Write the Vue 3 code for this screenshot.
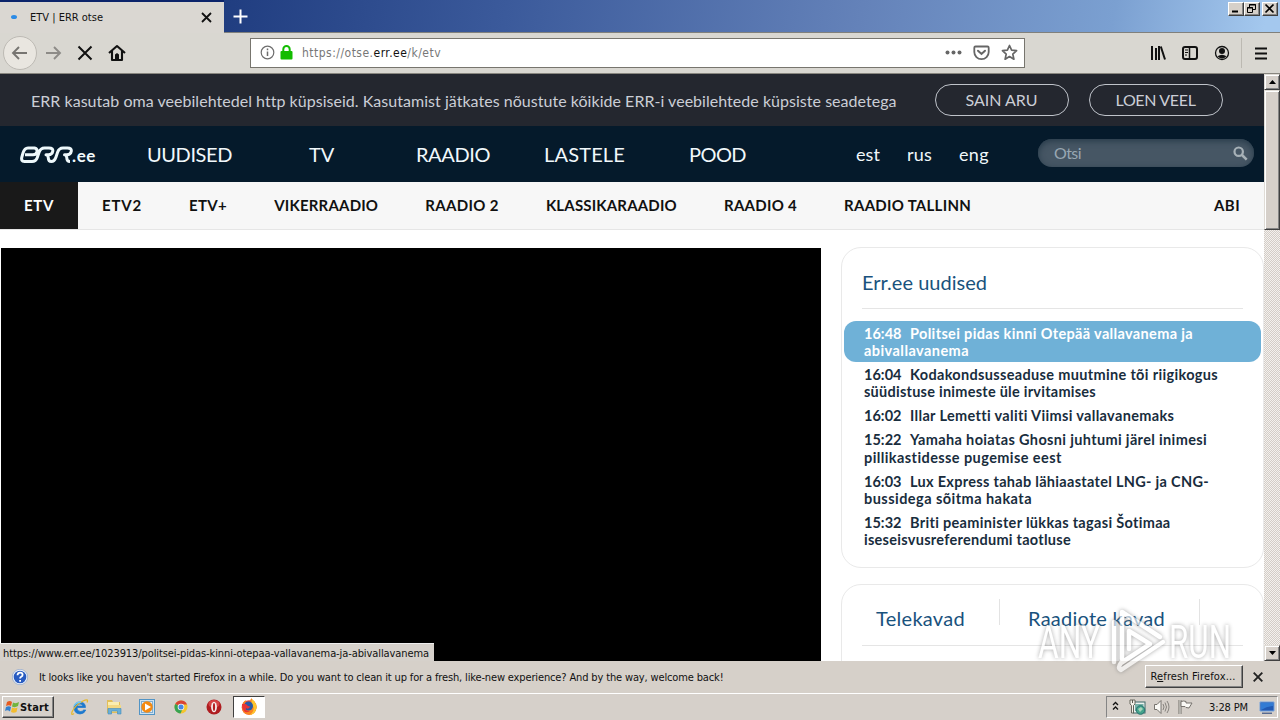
<script setup>
// Spreads letter spacing so that a label occupies a given width in pixels.
const vFit = {
  mounted(el, { value }) {
    const count = el.textContent.length
    el.style.letterSpacing = (value - el.getBoundingClientRect().width) / count + 'px'
  },
}

const mainNav = [
  { label: 'UUDISED', width: 85, id: 'uudised' },
  { label: 'TV', width: 25, id: 'tv' },
  { label: 'RAADIO', width: 74, id: 'raadio' },
  { label: 'LASTELE', width: 81, id: 'lastele' },
  { label: 'POOD', width: 57, id: 'pood' },
]
const languages = [
  { label: 'est', width: 24 },
  { label: 'rus', width: 25 },
  { label: 'eng', width: 30 },
]
const channels = [
  { label: 'ETV2', width: 40 },
  { label: 'ETV+', width: 38 },
  { label: 'VIKERRAADIO', width: 104 },
  { label: 'RAADIO 2', width: 73.5 },
  { label: 'KLASSIKARAADIO', width: 131 },
  { label: 'RAADIO 4', width: 73 },
  { label: 'RAADIO TALLINN', width: 127 },
]
const news = [
  { time: '16:48', first: 'Politsei pidas kinni Otepää vallavanema ja', w1: 283, second: 'abivallavanema', w2: 105 },
  { time: '16:04', first: 'Kodakondsusseaduse muutmine tõi riigikogus', w1: 308, second: 'süüdistuse inimeste üle irvitamises', w2: 232 },
  { time: '16:02', first: 'Illar Lemetti valiti Viimsi vallavanemaks', w1: 264 },
  { time: '15:22', first: 'Yamaha hoiatas Ghosni juhtumi järel inimesi', w1: 297, second: 'pillikastidesse pugemise eest', w2: 198 },
  { time: '16:03', first: 'Lux Express tahab lähiaastatel LNG- ja CNG-', w1: 299, second: 'bussidega sõitma hakata', w2: 168 },
  { time: '15:32', first: 'Briti peaminister lükkas tagasi Šotimaa', w1: 261, second: 'iseseisvusreferendumi taotluse', w2: 207 },
]
</script>

<template>
  <div class="screen">
    <div class="titlebar">
      <div class="tab">
        <i class="throbber"></i>
        <span v-fit="73" class="tab-title">ETV | ERR otse</span>
        <svg class="tab-close" width="11" height="11" viewBox="0 0 11 11"><path d="M1 1l9 9M10 1l-9 9" stroke="#111" stroke-width="1.8" /></svg>
      </div>
      <svg class="new-tab" width="15" height="15" viewBox="0 0 15 15"><path d="M7.5 .5v14M.5 7.500h14" stroke="#fff" stroke-width="2" /></svg>
      <div class="window-buttons">
        <b><svg width="13" height="11"><path d="M3 8.5h6" stroke="#000" stroke-width="2" /></svg></b>
        <b><svg width="13" height="11"><path d="M4.5 4V1.5h6v5H8M4 2h7M2.5 4.5h5v5h-5zM2 5h6" fill="none" stroke="#000" /></svg></b>
        <b class="close"><svg width="13" height="11"><path d="M2.5 1.5l8 8M10.5 1.5l-8 8" stroke="#000" stroke-width="1.7" /></svg></b>
      </div>
    </div>

    <div class="toolbar">
      <div class="nav-tools">
        <span class="back"><svg width="18" height="16" viewBox="0 0 18 16"><path d="M16 8H2M8 2L2 8l6 6" fill="none" stroke="#777571" stroke-width="1.9" /></svg></span>
        <svg width="18" height="16" viewBox="0 0 18 16"><path d="M2 8h14M10 2l6 6-6 6" fill="none" stroke="#8d8b87" stroke-width="1.9" /></svg>
        <svg class="stop" width="16" height="16" viewBox="0 0 16 16"><path d="M1.5 1.5l13 13M14.500 1.5l-13 13" stroke="#111" stroke-width="2" /></svg>
        <svg class="home" width="18" height="18" viewBox="0 0 18 18"><path d="M1 9l8-7 8 7M4 7v9h10V7" fill="none" stroke="#111" stroke-width="2.1" stroke-linejoin="round" /><path d="M7 15.500v-5L9 9l2 1.500v5z" fill="#111" /></svg>
      </div>
      <div class="address">
        <svg class="info" width="15" height="15" viewBox="0 0 15 15"><circle cx="7.500" cy="7.500" r="6.300" fill="none" stroke="#6d6d6d" stroke-width="1.2" /><path d="M7.500 6.500v4.500M7.500 3.500v1.800" stroke="#6d6d6d" stroke-width="1.500" /></svg>
        <svg class="lock" width="13" height="15" viewBox="0 0 13 15"><path d="M3.300 7V4.300a3.200 3.200 0 0 1 6.400 0V7" fill="none" stroke="#12bc00" stroke-width="2" /><rect x=".5" y="6" width="12" height="8.500" rx="1" fill="#12bc00" /></svg>
        <span v-fit="139" class="url">https://otse.<em>err.ee</em>/k/etv</span>
        <svg class="dots" width="17" height="5" viewBox="0 0 17 5"><g fill="#666"><circle cx="2.500" cy="2.500" r="2" /><circle cx="8.500" cy="2.500" r="2" /><circle cx="14.500" cy="2.500" r="2" /></g></svg>
        <svg class="pocket" width="17" height="16" viewBox="0 0 17 16"><path d="M2.500 1.500h12q1.200 0 1.200 1.200V7a7.200 7.200 0 0 1-14.400 0V2.700q0-1.200 1.200-1.200z" fill="none" stroke="#666" stroke-width="1.800" /><path d="M5 5.700L8.500 9 12 5.700" fill="none" stroke="#666" stroke-width="2" stroke-linecap="round" /></svg>
        <svg class="star" width="17" height="17" viewBox="0 0 17 17"><path d="M8.500 1.500l2.100 4.700 5 .5-3.800 3.400 1.100 5.100-4.400-2.700-4.400 2.700 1.100-5.100-3.800-3.400 5-.5z" fill="none" stroke="#666" stroke-width="1.700" stroke-linejoin="round" /></svg>
      </div>
      <div class="menu-tools">
        <svg width="16" height="16" viewBox="0 0 16 16"><path d="M2 1v14M6 3v12M9 1v14" stroke="#111" stroke-width="2" /><path d="M10.800 1.500l4.200 13" stroke="#111" stroke-width="2" /></svg>
        <svg class="sidebar" width="16" height="16" viewBox="0 0 16 16"><rect x="1" y="2" width="14" height="12" rx="2" fill="none" stroke="#111" stroke-width="2" /><path d="M7.500 2v12" stroke="#111" stroke-width="1.500" /><path d="M3 5h3M3 7.500h3M3 10h2" stroke="#111" /></svg>
        <svg class="account" width="16" height="16" viewBox="0 0 16 16"><circle cx="8" cy="8" r="6.500" fill="none" stroke="#111" stroke-width="1.300" /><circle cx="8" cy="6" r="3" fill="#111" /><path d="M3.500 11.200q4.500-3 9 0Q8 16 3.500 11.200z" fill="#111" /></svg>
        <i class="divider"></i>
        <svg class="burger" width="12" height="13" viewBox="0 0 12 13"><path d="M0 1.500h12M0 6.500h12M0 11.500h12" stroke="#111" stroke-width="2" /></svg>
      </div>
    </div>

    <div class="viewport">
      <div class="page">
        <div class="cookies">
          <span v-fit="865">ERR kasutab oma veebilehtedel http küpsiseid. Kasutamist jätkates nõustute kõikide ERR-i veebilehtede küpsiste seadetega</span>
          <a><span v-fit="72">SAIN ARU</span></a>
          <a class="more"><span v-fit="80">LOEN VEEL</span></a>
        </div>
        <header class="header">
          <div class="brand">
            <svg width="53" height="18" viewBox="0 0 53 18"><path d="M5 8.700h8q3.500 0 4-3T14.500 2H8Q4.500 2 3 7L2 10.500q-1.500 5 2.500 5H12q4 0 5.300-4L19 6.500Q20.500 2 24.500 2H29q4.500 0 3.700 3.500-.6 3.200-4.200 3.200H26q2.200 0 2.300 3.300.1 3.500 3 3.500 3.200 0 4.700-4.500l1.500-4.500Q39 2 43 2h4.500q4.500 0 3.700 3.500-.6 3.200-4.200 3.200h-2.500q2.200 0 2.300 3.300.1 3.500 3.200 3.500" fill="none" stroke="#eef8fb" stroke-width="3" stroke-linejoin="round" /></svg>
            <span v-fit="24">.ee</span>
          </div>
          <nav class="main-nav"><a v-for="n in mainNav" :key="n.id" v-fit="n.width" :class="n.id">{{ n.label }}</a></nav>
          <div class="languages"><a v-for="l in languages" :key="l.label" v-fit="l.width">{{ l.label }}</a></div>
          <div class="search">
            <span v-fit="27">Otsi</span>
            <svg width="15" height="15" viewBox="0 0 15 15"><circle cx="5.700" cy="5.700" r="4.200" fill="none" stroke="#a7b1b7" stroke-width="2.200" /><path d="M9 9l4.700 4.700" stroke="#a7b1b7" stroke-width="2.500" /></svg>
          </div>
        </header>
        <nav class="channels">
          <a class="active"><span v-fit="30">ETV</span></a>
          <a v-for="c in channels" :key="c.label" v-fit="c.width">{{ c.label }}</a>
          <a v-fit="26" class="help">ABI</a>
        </nav>
        <div class="content">
          <div class="player"></div>
          <aside>
            <section class="card">
              <h2><span v-fit="125">Err.ee uudised</span></h2>
              <ul>
                <li v-for="(item, i) in news" :key="item.time" :class="{ selected: i === 0 }">
                  <div><time v-fit="37.500">{{ item.time }}</time><span v-fit="item.w1">{{ item.first }}</span></div>
                  <div v-if="item.second"><span v-fit="item.w2">{{ item.second }}</span></div>
                </li>
              </ul>
            </section>
            <section class="card schedules">
              <div class="schedule-tabs">
                <span class="schedule"><span v-fit="89">Telekavad</span></span>
                <span class="schedule radio"><span v-fit="137">Raadiote kavad</span></span>
              </div>
            </section>
          </aside>
        </div>
      </div>
      <div class="scrollbar">
        <b class="arrow"><svg width="7" height="4"><path d="M0 4L3.500 0 7 4z" /></svg></b>
        <b class="thumb"></b>
        <b class="arrow down"><svg width="7" height="4"><path d="M0 0h7L3.500 4z" /></svg></b>
      </div>
      <div class="status"><span v-fit="426">https://www.err.ee/1023913/politsei-pidas-kinni-otepaa-vallavanema-ja-abivallavanema</span></div>
    </div>

    <div class="infobar">
      <svg width="16" height="16" viewBox="0 0 16 16"><circle cx="8" cy="8" r="7" fill="#285bc1" stroke="#edf2fa" stroke-width="1.300" /><circle cx="8" cy="8" r="7.700" fill="none" stroke="#7d98c4" stroke-width=".6" /><path d="M5.500 6.300q.2-2.600 2.600-2.600 2.500 0 2.500 2 0 1.300-1.400 2-1.100.6-1.100 1.700M8.100 11v1.800" fill="none" stroke="#fff" stroke-width="1.800" /></svg>
      <span v-fit="684.500">It looks like you haven't started Firefox in a while. Do you want to clean it up for a fresh, like-new experience? And by the way, welcome back!</span>
      <button><span v-fit="85">R<u>e</u>fresh Firefox...</span></button>
      <svg class="dismiss" width="10" height="10" viewBox="0 0 10 10"><path d="M.7.7l8.600 8.600M9.300.7L.7 9.300" stroke="#222" stroke-width="1.900" /></svg>
    </div>

    <div class="taskbar">
      <div class="start">
        <svg width="16" height="16" viewBox="0 0 16 16"><path d="M3 3q3-2 5 0L7 7Q5 5.500 2 7z" fill="#e75b20" /><path d="M9 3.500q3 1.500 6-.5l-1 4q-3 2-6 .500z" fill="#72b43d" /><path d="M2 8q3-1.500 5 0l-1 4.500q-2.500-2-5-.500z" fill="#3480cf" /><path d="M8 8.500q3 1.500 5.500 0l-1 4.500q-3 1.500-5.500 0z" fill="#f3bc2f" /></svg>
        <span v-fit="29">Start</span>
      </div>
      <svg class="app" width="18" height="18" viewBox="0 0 18 18"><path d="M14.500 9.500H6q0 4 3.500 4 2.200 0 3-1.500h2.300Q13.200 16 9 16 3 15.500 3 9.500 3.500 4 9 4q5.500.3 5.500 5.500zM6 8h5.800Q11.500 6 9 6 6.500 6 6 8z" fill="#1c79ce" stroke="#1c79ce" stroke-width=".7" /><path d="M3 15.500Q0 18 1 14 4 7 12 3q6-3 4 1.500" fill="none" stroke="#e6b92e" stroke-width="1.300" /><path d="M3 8q2-4 7-4" fill="none" stroke="#72caf4" stroke-width="1.300" /></svg>
      <svg class="app" width="18" height="18" viewBox="0 0 18 18"><path d="M2 2h5l1 2h7v11H2z" fill="#e2be59" /><path d="M3 4h11v9H3z" fill="#fbeeb0" /><path d="M3 7h13v7H3z" fill="#f4d984" /><path d="M3 16v-5.500h13V16h-3.500v-3h-6v3z" fill="#6aafd6" stroke="#3f8abe" stroke-width=".6" /></svg>
      <svg class="app" width="18" height="18" viewBox="0 0 18 18"><rect x="1.500" y="1.500" width="15" height="15" fill="#cde2f1" stroke="#5294c5" /><rect x="3.500" y="3.500" width="11" height="11" fill="#e3edf5" stroke="#80add0" /><circle cx="9" cy="9" r="5.700" fill="#f48a12" /><path d="M7 5.500v7L13 9z" fill="#fff" /></svg>
      <svg class="app" width="18" height="18" viewBox="0 0 18 18"><circle cx="9" cy="9" r="6.500" fill="#f4c52e" /><path d="M9 9L3.200 6A6.500 6.500 0 0 1 15 6.500H9z" fill="#d94335" /><path d="M3.200 6A6.500 6.500 0 0 0 8.500 15.500L11 10z" fill="#38a352" /><circle cx="9" cy="9" r="3.300" fill="#f5f5f5" /><circle cx="9" cy="9" r="2.500" fill="#4786e4" /></svg>
      <svg class="app opera" width="18" height="18" viewBox="0 0 18 18"><circle cx="9" cy="9" r="7.500" fill="#af1d20" /><ellipse cx="9" cy="6" rx="5.500" ry="4" fill="#d74345" /><ellipse cx="9" cy="9" rx="2.900" ry="5.300" fill="#f4eeee" /><ellipse cx="9" cy="9" rx="1.100" ry="4" fill="#b51f21" /></svg>
      <div class="running"><svg width="18" height="18" viewBox="0 0 18 18"><circle cx="9" cy="9.500" r="7.300" fill="#f04d2e" /><path d="M2 10Q2 4 6 2q-1 3 1 4l4-1Q9 2 12 0q-.5 2 2 3 4 4 2 9-3 6-8 4.500Q3 16 2 10z" fill="#fa8420" /><path d="M12 1q5 4 4.500 9-1 6-7 7 5-3 4-8-2-2-2-5 0-2 .5-3z" fill="#fdc52d" /><circle cx="8.500" cy="8" r="4.500" fill="#2859a8" /><path d="M2 6q4-1 6 2 2 0 2 1-2 3-4 1-1 3 4 3-4 2.500-6 0-2.500-3-2-7z" fill="#e83435" /></svg></div>
      <div class="tray">
        <svg class="chevrons" width="7" height="10" viewBox="0 0 7 10"><path d="M1 4l2.500-2.500L6 4M1 8.500L3.500 6 6 8.500" fill="none" stroke="#111" stroke-width="1.300" /></svg>
        <svg class="network" width="17" height="16" viewBox="0 0 17 16"><rect x="4.500" y="3" width="11.500" height="11" fill="#edf2ee" stroke="#3e6869" /><path d="M6 5h8.500v7H6z" fill="#78b2a8" /><path d="M1 1h5v4L4.500 6.500V14h-2V6.500L1 5z" fill="#f4f2e9" stroke="#5b5b51" stroke-width=".9" /><path d="M3.500 1v3" stroke="#5b5b51" /><circle cx="11.500" cy="11" r="4.300" fill="#45a38b" stroke="#25726f" /><path d="M9 10l3-2 2 2-3 3z" fill="#a9d4bb" /></svg>
        <svg class="volume" width="17" height="16" viewBox="0 0 17 16"><path d="M1.500 5.500H4l4-4v13l-4-4H1.500z" fill="#faf9f5" stroke="#77736e" /><path d="M10 5q2 3 0 6M12 3.500q3 4.500 0 9M14 2q4 6 0 12" fill="none" stroke="#86837e" /></svg>
        <svg class="flag" width="17" height="16" viewBox="0 0 17 16"><path d="M3 1v14" stroke="#716e69" stroke-width="3" /><path d="M3 1v14" stroke="#f6f4ef" /><path d="M4 2.500q3-1 5 0v1.500h6l-3 5-3-.5-1-1H4z" fill="#faf9f5" stroke="#77736e" /></svg>
        <span v-fit="39" class="clock">3:28 PM</span>
        <svg class="desktop" width="16" height="13" viewBox="0 0 16 13"><path d="M1 1h14v9H1z" fill="#2159b3" stroke="#74a3dd" /><path d="M2 2h12v3Q8 5 2 9z" fill="#327bd4" /><path d="M3 12.200h10" stroke="#1d3c76" /></svg>
      </div>
    </div>

    <svg class="watermark" width="202" height="72" viewBox="0 0 202 72">
      <g class="mark">
        <text x="4" y="54" textLength="62" lengthAdjust="spacingAndGlyphs">ANY</text>
        <path d="M80 18V58M88 55V8L126 33M95 45V27L116 40 87 59Q83 64 87 66L129 38" />
        <text x="135" y="54" textLength="62" lengthAdjust="spacingAndGlyphs">RUN</text>
      </g>
    </svg>
  </div>
</template>

<style>
body { overflow: hidden; }
</style>

<style scoped>
.screen { position: relative; width: 1280px; height: 720px; overflow: hidden; display: flex; flex-direction: column; background: #d6d0ca; font: 11px "DejaVu Sans Condensed", "DejaVu Sans", sans-serif; color: #111; }
.screen * { box-sizing: border-box; }
span, a, time { white-space: nowrap; }
svg { display: block; flex: none; }
.titlebar { height: 33px; flex: none; display: flex; border-bottom: 1px solid #80807c; background: linear-gradient(100deg, #1f3c7c 0, #203d80 220px, #3b5a9b 500px, #6482b9 850px, #7ba0d1 1100px, #a4c8ee 1250px); }
.tab { width: 224px; height: 33px; border-top: 2px solid #0b246b; background: #dad7d2; display: flex; align-items: center; }
.throbber { width: 6px; height: 4px; margin: 0 0 1px 11px; border-radius: 50%; background: #2b8be6; }
.tab-title { margin-left: 13px; line-height: 20px; }
.tab-close { margin-left: 98px; }
.new-tab { margin: 9px 0 0 9px; }
.window-buttons { display: flex; margin: 2px 2px 0 auto; }
.window-buttons b { width: 16px; height: 14px; background: #d6d0c9; border: 1px solid; border-color: #fff #404040 #404040 #fff; box-shadow: inset -1px -1px #858585; }
.window-buttons .close { margin-left: 2px; }
.toolbar { height: 41px; flex: none; display: flex; align-items: center; background: #d9d7d1; border-bottom: 1px solid #88867f; }
.nav-tools { width: 250px; display: flex; align-items: center; }
.back { width: 34px; height: 34px; margin: 0 7px 0 3px; border: 1px solid #bdbab4; border-radius: 50%; background: #e9e6e0; display: grid; place-items: center; }
.stop { margin-left: 15px; }
.home { margin-left: 15px; }
.address { width: 775px; height: 30px; margin-top: -1px; display: flex; align-items: center; border: 1px solid #77756e; background: #fff; }
.info { margin-left: 9px; }
.lock { margin-left: 5px; }
.url { margin: 1px 0 0 9px; font-size: 12px; color: #777; }
.url em { color: #111; font-style: normal; }
.dots { margin-left: 504px; }
.pocket { margin-left: 11px; }
.star { margin-left: 11px; }
.menu-tools { display: flex; align-items: center; margin-left: 125px; }
.sidebar { margin-left: 16px; }
.account { margin-left: 16px; }
.divider { width: 1px; height: 30px; margin: 0 13px 0 11px; background: #bcb9b2; }

.viewport { position: relative; height: 587px; flex: none; display: flex; background: #fff; }
.page { width: 1264px; overflow: hidden; font-family: Lato, "Open Sans", sans-serif; }
.cookies { height: 52px; display: flex; align-items: center; padding: 0 0 1px 31px; background: #24272f; color: #cbced6; font-size: 16px; }
.cookies > span { margin-top: 1px; }
.cookies a { width: 134px; height: 32px; margin-left: 39px; margin-right: 1px; position: relative; left: -1px; border: 1px solid #bfc3ca; border-radius: 16px; display: grid; place-items: center; }
.cookies .more { margin-left: 19px; }
.header { height: 56px; display: flex; align-items: center; background: #051a2b; color: #f1f8fb; }
.brand { display: flex; align-items: center; width: 147px; padding-left: 20px; font: 700 17px Lato, sans-serif; }
.brand svg { margin-top: 1px; }
.brand span { margin-top: 2px; margin-left: -1px; }
.main-nav { width: 709px; display: flex; font-size: 20px; line-height: 30px; }
.tv { margin-left: 77px; }
.raadio { margin-left: 82px; }
.lastele { margin-left: 54px; }
.pood { margin-left: 64px; }
.languages { width: 182px; display: flex; gap: 27px; font-size: 18px; line-height: 26px; }
.search { width: 216px; height: 28px; margin-top: -2px; border-radius: 14px; display: flex; align-items: center; justify-content: space-between; padding: 0 6px 0 16px; background: #465664; box-shadow: inset 0 2px 6px #263a49; color: #98a7b2; font-size: 16px; }
.search span { margin-top: -1px; }
.channels { height: 48px; display: flex; align-items: center; background: #f7f7f7; border-bottom: 1px solid #e6e6e6; font-size: 15px; font-weight: 700; color: #111; }
.channels a { line-height: 18px; padding-bottom: 2px; }
.channels .active { height: 47px; width: 78px; padding-left: 24px; margin-right: 24px; display: flex; align-items: center; background: #191919; color: #fff; }
.channels > a:not(.active) { margin-right: 47.100px; }
.channels > a.help { margin: 0 24px 0 auto; }
.content { display: flex; padding: 17px 0 0 1px; }
.player { width: 820px; height: 420px; margin-top: 1px; background: #000; }
aside { width: 423px; margin-left: 20px; }
.card { height: 321px; border: 1px solid #e9e9e9; border-radius: 20px; margin-bottom: 16px; padding: 0 2px; }
h2 { height: 61px; margin: 0 18px 12px 18px; border-bottom: 1px solid #e5e5e5; padding: 21px 0 0; font: 400 20px/26px Lato, sans-serif; color: #19527d; }
ul { list-style: none; margin: 0; padding: 0; font-size: 14.500px; font-weight: 700; line-height: 17.400px; color: #192d3d; }
li { padding: 3.500px 20px; border-radius: 12px; }
li div { height: 17.200px; display: flex; }
li.selected { background: #6fb1d7; color: #fff; }
time { margin-right: 8.500px; }
.schedules { padding: 0 20px; }
.schedule-tabs { height: 61px; display: flex; padding-top: 14px; border-bottom: 1px solid #e5e5e5; font-size: 20px; color: #19527d; }
.schedule { height: 26px; width: 138px; padding: 7px 0 0 14px; border-right: 1px solid #e3e3e3; line-height: 24px; }
.schedule > span { display: inline-block; }
.radio { width: 200px; padding-left: 28px; }
.scrollbar { width: 16px; display: flex; flex-direction: column; background: repeating-conic-gradient(#d3cdc7 0 25%, #f4f1ee 0 50%) 0 0 / 2px 2px; }
.scrollbar b { border: 1px solid; border-color: #e0dcd6 #404040 #404040 #e0dcd6; box-shadow: inset 1px 1px #fff, inset -1px -1px #858585; background: #d6d0ca; }
.arrow { height: 16px; display: grid; place-items: center; }
.thumb { height: 140px; }
.down { margin-top: auto; }
.status { position: absolute; left: 0; bottom: 0; width: 434px; height: 18px; padding-left: 3px; background: #d6d1cb; border-top: 1px solid #eee; line-height: 20px; }
.infobar { height: 32px; flex: none; display: flex; align-items: center; padding-left: 12px; background: #d6d0c9; }
.infobar > span { margin-left: 11px; }
button { width: 98px; height: 23px; margin: -1px 0 0 421px; padding: 0 0 1px 5px; border: 1px solid; border-color: #fff #404040 #404040 #fff; box-shadow: inset -1px -1px #858585; background: #d6d0c9; font: inherit; text-align: left; color: #111; }
.dismiss { margin: 0 0 0 10px; }
.taskbar { height: 27px; flex: none; border-top: 1px solid #fff; display: flex; align-items: center; padding-left: 2px; }
.start { width: 52px; height: 22px; margin-right: 17px; border: 1px solid; border-color: #fff #404040 #404040 #fff; box-shadow: inset -1px -1px #858585; display: flex; align-items: center; font-weight: 700; padding-left: 1px; }
.app { margin-right: 15.500px; }
.opera { margin-right: 10px; }
.running { width: 32px; height: 22px; border: 1px solid; border-color: #404040 #fff #fff #404040; background: #fff; display: grid; place-items: center; }
.tray { width: 172px; height: 22px; margin: 0 2px 0 auto; border: 1px solid; border-color: #858585 #fff #fff #858585; display: flex; align-items: center; }
.chevrons { margin: -3px 0 0 5px; }
.network { margin-left: 10px; }
.volume { margin-left: 7px; }
.flag { margin-left: 7px; }
.clock { margin-left: 15px; }
.desktop { margin-left: 11px; }
.watermark { position: absolute; left: 1034px; top: 604px; filter: drop-shadow(0 0 2px #777); opacity: .65; }
.mark text { font: 400 47px Roboto, sans-serif; fill: #fff; }
.mark path { fill: none; stroke: #fff; stroke-width: 4.500; stroke-linecap: round; stroke-linejoin: round; }
</style>
